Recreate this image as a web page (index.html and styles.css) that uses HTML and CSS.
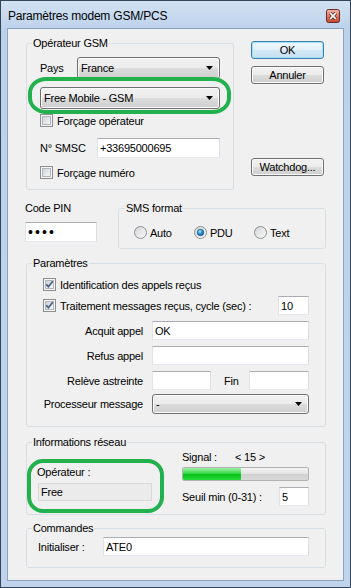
FILE: index.html
```html
<!DOCTYPE html>
<html lang="fr">
<head>
    <meta charset="UTF-8">
    <title>Paramètres modem GSM/PCS</title>
    <link rel="stylesheet" href="styles.css">
</head>
<body>
    <svg class="defs" width="0" height="0">
        <defs>
            <linearGradient id="cbg" x1="0" y1="0" x2="1" y2="1">
                <stop offset="0" stop-color="#cdd1d6"/>
                <stop offset="1" stop-color="#f8f8f8"/>
            </linearGradient>
            <linearGradient id="rbg" x1="0" y1="0" x2="1" y2="1">
                <stop offset="0" stop-color="#d0d3d8"/>
                <stop offset="1" stop-color="#fbfbfb"/>
            </linearGradient>
            <radialGradient id="rdot" cx="0.4" cy="0.35" r="0.7">
                <stop offset="0" stop-color="#b6ecff"/>
                <stop offset="0.45" stop-color="#2e97d8"/>
                <stop offset="1" stop-color="#0c4f88"/>
            </radialGradient>
            <linearGradient id="closeg" x1="0" y1="0" x2="0" y2="1">
                <stop offset="0" stop-color="#efb9ad"/>
                <stop offset="0.5" stop-color="#dc7a66"/>
                <stop offset="1" stop-color="#c2452f"/>
            </linearGradient>
        </defs>
    </svg>

    <div class="window">
        <div class="titlebar">
            <span class="title">Paramètres modem GSM/PCS</span>
            <span class="close">
                <svg width="14" height="14" viewBox="0 0 14 14">
                    <rect x="0.5" y="0.5" width="13" height="13" rx="2" fill="url(#closeg)" stroke="#6e2a22"/>
                    <path d="M4.2 4.2L9.8 9.8M9.8 4.2L4.2 9.8" stroke="#5a1e16" stroke-width="3.2"/>
                    <path d="M4.2 4.2L9.8 9.8M9.8 4.2L4.2 9.8" stroke="#fff" stroke-width="1.7"/>
                </svg>
            </span>
        </div>

        <div class="client">
            <!-- operateur + boutons -->
            <div class="row-top">
                <fieldset class="group gsm">
                    <legend>Opérateur GSM</legend>
                    <div class="line pays">
                        <span class="lbl-pays">Pays</span>
                        <div class="combo grow">
                            <span>France</span>
                            <svg width="7" height="4" viewBox="0 0 7 4"><path d="M0 0h7L3.5 4z"/></svg>
                        </div>
                    </div>
                    <div class="combo operator">
                        <span>Free Mobile - GSM</span>
                        <svg width="7" height="4" viewBox="0 0 7 4"><path d="M0 0h7L3.5 4z"/></svg>
                    </div>
                    <label class="check force-op">
                        <svg width="13" height="13" viewBox="0 0 13 13"><rect x=".5" y=".5" width="12" height="12" fill="#f4f4f4" stroke="#8e8f8f"/><rect x="2.5" y="2.5" width="8" height="8" fill="url(#cbg)" stroke="#b3b7bc"/></svg>
                        <span>Forçage opérateur</span>
                    </label>
                    <div class="line smsc">
                        <span class="lbl-smsc">N° SMSC</span>
                        <input class="field grow h20" type="text" value="+33695000695">
                    </div>
                    <label class="check force-num">
                        <svg width="13" height="13" viewBox="0 0 13 13"><rect x=".5" y=".5" width="12" height="12" fill="#f4f4f4" stroke="#8e8f8f"/><rect x="2.5" y="2.5" width="8" height="8" fill="url(#cbg)" stroke="#b3b7bc"/></svg>
                        <span>Forçage numéro</span>
                    </label>
                </fieldset>

                <div class="buttons">
                    <button class="btn default">OK</button>
                    <button class="btn cancel">Annuler</button>
                    <button class="btn watchdog">Watchdog...</button>
                </div>
            </div>

            <!-- code pin + format -->
            <div class="row-pin">
                <div class="pin">
                    <div class="lbl-pin">Code PIN</div>
                    <div class="field pin-field">••••</div>
                </div>
                <fieldset class="group sms">
                    <legend>SMS format</legend>
                    <div class="radios">
                        <label class="radio">
                            <svg width="13" height="13" viewBox="0 0 13 13"><circle cx="6.5" cy="6.5" r="6" fill="url(#rbg)" stroke="#8e8f8f"/></svg>
                            <span>Auto</span>
                        </label>
                        <label class="radio">
                            <svg width="13" height="13" viewBox="0 0 13 13"><circle cx="6.5" cy="6.5" r="6" fill="url(#rbg)" stroke="#8e8f8f"/><circle cx="6.5" cy="6.5" r="3.3" fill="url(#rdot)" stroke="#1b5486" stroke-width=".6"/></svg>
                            <span>PDU</span>
                        </label>
                        <label class="radio">
                            <svg width="13" height="13" viewBox="0 0 13 13"><circle cx="6.5" cy="6.5" r="6" fill="url(#rbg)" stroke="#8e8f8f"/></svg>
                            <span>Text</span>
                        </label>
                    </div>
                </fieldset>
            </div>

            <!-- parametres -->
            <fieldset class="group params">
                <legend>Paramètres</legend>
                <label class="check ident">
                    <svg width="13" height="13" viewBox="0 0 13 13"><rect x=".5" y=".5" width="12" height="12" fill="#f4f4f4" stroke="#8e8f8f"/><rect x="2.5" y="2.5" width="8" height="8" fill="url(#cbg)" stroke="#b3b7bc"/><path d="M3.3 6.4l2.1 2.3 4.3-5.4" fill="none" stroke="#4c6189" stroke-width="1.8"/></svg>
                    <span>Identification des appels reçus</span>
                </label>
                <div class="line cycle">
                    <label class="check">
                        <svg width="13" height="13" viewBox="0 0 13 13"><rect x=".5" y=".5" width="12" height="12" fill="#f4f4f4" stroke="#8e8f8f"/><rect x="2.5" y="2.5" width="8" height="8" fill="url(#cbg)" stroke="#b3b7bc"/><path d="M3.3 6.4l2.1 2.3 4.3-5.4" fill="none" stroke="#4c6189" stroke-width="1.8"/></svg>
                        <span>Traitement messages reçus, cycle (sec) :</span>
                    </label>
                    <input class="field cycle-field" type="text" value="10">
                </div>
                <div class="line form-row">
                    <span class="lbl-right">Acquit appel</span>
                    <input class="field grow" type="text" value="OK">
                </div>
                <div class="line form-row">
                    <span class="lbl-right">Refus appel</span>
                    <input class="field grow" type="text" value="">
                </div>
                <div class="line form-row">
                    <span class="lbl-right">Relève astreinte</span>
                    <input class="field short" type="text" value="">
                    <span class="lbl-fin">Fin</span>
                    <input class="field fin-field" type="text" value="">
                </div>
                <div class="line form-row proc">
                    <span class="lbl-right">Processeur message</span>
                    <div class="combo grow">
                        <span>-</span>
                        <svg width="7" height="4" viewBox="0 0 7 4"><path d="M0 0h7L3.5 4z"/></svg>
                    </div>
                </div>
            </fieldset>

            <!-- informations reseau -->
            <fieldset class="group network">
                <legend>Informations réseau</legend>
                <div class="net-cols">
                    <div class="net-left">
                        <div class="lbl-op">Opérateur :</div>
                        <div class="readonly">Free</div>
                    </div>
                    <div class="net-right">
                        <div class="signal"><span class="lbl-signal">Signal :</span><span>&lt; 15 &gt;</span></div>
                        <div class="progress"><div class="progress-fill" style="width: 46%"></div></div>
                        <div class="line seuil">
                            <span>Seuil min (0-31) :</span>
                            <input class="field seuil-field" type="text" value="5">
                        </div>
                    </div>
                </div>
            </fieldset>

            <!-- commandes -->
            <fieldset class="group commands">
                <legend>Commandes</legend>
                <div class="line init">
                    <span class="lbl-init">Initialiser :</span>
                    <input class="field grow" type="text" value="ATE0">
                </div>
            </fieldset>

            <div class="mark mark-op"></div>
            <div class="mark mark-net"></div>
        </div>
    </div>
</body>
</html>
```

FILE: styles.css
```css
body {
    margin: 0;
    font-family: "Liberation Sans", Arial, sans-serif;
    font-size: 11px;
    letter-spacing: -0.22px;
    color: #000;
    background: #fff;
}
.defs {
    position: absolute;
}
.window {
    width: 351px;
    height: 588px;
    box-sizing: border-box;
    border: 1px solid #34455a;
    background: linear-gradient(#d3e2f3, #bcd2eb 28px, #bfd4ec);
    padding: 0 6px 6px;
    display: flex;
    flex-direction: column;
}
.titlebar {
    height: 27px;
    box-sizing: border-box;
    padding: 3px 4px 0 1px;
    display: flex;
    align-items: center;
}
.title {
    font-size: 12px;
    letter-spacing: -0.2px;
}
.close {
    margin-left: auto;
    width: 14px;
    height: 14px;
    display: flex;
}
.client {
    flex: 1;
    position: relative;
    border: 1px solid #8ba3bf;
    background: #f0f0f0;
    padding: 8px 17px 0 18px;
}

/* group boxes */
.group {
    margin: 0;
    border: 1px solid #d5dfe5;
    border-radius: 3px;
    min-width: 0;
    box-sizing: border-box;
}
.group legend {
    padding: 0 1px;
    line-height: 13px;
}
.line {
    display: flex;
    align-items: center;
}
.grow {
    flex: 1;
    min-width: 0;
}

/* controls */
.field {
    height: 19px;
    box-sizing: border-box;
    margin: 0;
    padding: 0 2px;
    border: 1px solid;
    border-color: #abadb3 #dbdfe6 #e3e9ef #e2e3ea;
    background: #fff;
    font: inherit;
    letter-spacing: inherit;
    color: #000;
    outline: none;
}
.h20 {
    height: 20px;
}
.combo {
    height: 22px;
    box-sizing: border-box;
    display: flex;
    align-items: center;
    justify-content: space-between;
    padding: 0 6px 0 3px;
    border: 1px solid #707070;
    border-radius: 3px;
    background: linear-gradient(#f2f2f2, #ebebeb 50%, #dddddd 50%, #cfcfcf);
    box-shadow: inset 0 0 0 1px #fbfbfb;
}
.btn {
    display: block;
    width: 73px;
    height: 18px;
    padding: 0;
    margin: 0;
    border: 1px solid #707070;
    border-radius: 3px;
    background: linear-gradient(#f2f2f2, #ebebeb 50%, #dddddd 50%, #cfcfcf);
    box-shadow: inset 0 0 0 1px #fbfbfb;
    font: inherit;
    letter-spacing: inherit;
    color: #000;
}
.btn.default {
    border-color: #3c7fb1;
    box-shadow: inset 0 0 0 1px #9fe0fb;
    background: linear-gradient(#eef7fc, #e3f1fa 50%, #d3e8f5 50%, #c6e0f0);
}
.check {
    display: flex;
    align-items: center;
    gap: 4px;
    height: 13px;
    white-space: nowrap;
}
.check svg, .radio svg {
    flex: none;
}
.radio {
    display: flex;
    align-items: center;
    gap: 3px;
    width: 60px;
    height: 13px;
}

/* operateur gsm */
.row-top {
    display: flex;
    gap: 17px;
}
.gsm {
    width: 208px;
    padding: 0 13px 10px;
}
.gsm legend {
    margin-left: -8px;
}
.pays {
    margin-top: 7px;
}
.lbl-pays {
    width: 37px;
}
.operator {
    margin-top: 8px;
}
.force-op {
    margin-top: 5px;
}
.smsc {
    margin-top: 11px;
}
.lbl-smsc {
    width: 57px;
}
.force-num {
    margin-top: 8px;
}
.buttons {
    width: 73px;
    padding-top: 4px;
}
.cancel {
    margin-top: 7px;
}
.watchdog {
    margin-top: 74px;
}

/* code pin + sms */
.row-pin {
    display: flex;
    margin: 12px 0 0 -1px;
}
.pin {
    width: 72px;
}
.lbl-pin {
    line-height: 13px;
}
.pin-field {
    margin-top: 7px;
    height: 20px;
    font-size: 14px;
    letter-spacing: 2.1px;
    line-height: 18px;
    padding-left: 2px;
}
.sms {
    margin-left: auto;
    width: 208px;
    padding: 0 8px 9px 15px;
}
.sms legend {
    margin-left: -9px;
}
.radios {
    display: flex;
    margin-top: 11px;
}

/* parametres */
.params {
    margin-top: 8px;
    padding: 0 16px 12px;
}
.params legend {
    margin-left: -11px;
}
.ident {
    margin-top: 8px;
}
.cycle {
    margin-top: 5px;
    justify-content: space-between;
}
.cycle-field {
    width: 31px;
}
.form-row {
    margin-top: 6px;
}
.lbl-right {
    width: 100px;
    margin-right: 9px;
    flex: none;
    display: flex;
    justify-content: flex-end;
    white-space: nowrap;
}
.short {
    width: 59px;
}
.lbl-fin {
    margin-left: 13px;
}
.fin-field {
    width: 60px;
    margin-left: auto;
}
.proc {
    margin-top: 4px;
}
.proc .combo {
    height: 20px;
}

/* informations reseau */
.network {
    margin-top: 9px;
    padding: 0 16px 8px 11px;
}
.network legend {
    margin-left: -6px;
}
.net-cols {
    display: flex;
    align-items: flex-start;
}
.net-left {
    width: 114px;
    padding-top: 17px;
}
.lbl-op {
    line-height: 13px;
    margin-left: -1px;
}
.readonly {
    margin-top: 4px;
    height: 18px;
    box-sizing: border-box;
    border: 1px solid #d9d9d9;
    background: #ebebeb;
    padding: 0 2px;
    line-height: 16px;
}
.net-right {
    width: 127px;
    margin-left: auto;
    padding-top: 2px;
}
.signal {
    line-height: 13px;
    display: flex;
}
.lbl-signal {
    width: 53px;
}
.progress {
    margin-top: 3px;
    height: 14px;
    box-sizing: border-box;
    border: 1px solid #b2b2b2;
    border-radius: 2px;
    background: linear-gradient(#f4f4f4, #e2e2e2 50%, #d0d0d0 50%, #dadada);
    overflow: hidden;
}
.progress-fill {
    height: 100%;
    background: linear-gradient(#9ef0a6, #38d948 45%, #05c117 55%, #27dc3a);
}
.seuil {
    margin-top: 6px;
}
.seuil-field {
    width: 30px;
    margin-left: auto;
}

/* commandes */
.commands {
    margin-top: 7px;
    padding: 0 16px 11px 11px;
}
.commands legend {
    margin-left: -6px;
}
.init {
    margin-top: 2px;
}
.lbl-init {
    width: 65px;
}

/* annotations vertes */
.mark {
    position: absolute;
    box-sizing: border-box;
    border: 4px solid #22b14c;
}
.mark-op {
    left: 20px;
    top: 48px;
    width: 203px;
    height: 37px;
    border-radius: 18px / 16px;
}
.mark-net {
    left: 19px;
    top: 430px;
    width: 137px;
    height: 54px;
    border-radius: 16px;
}
```
